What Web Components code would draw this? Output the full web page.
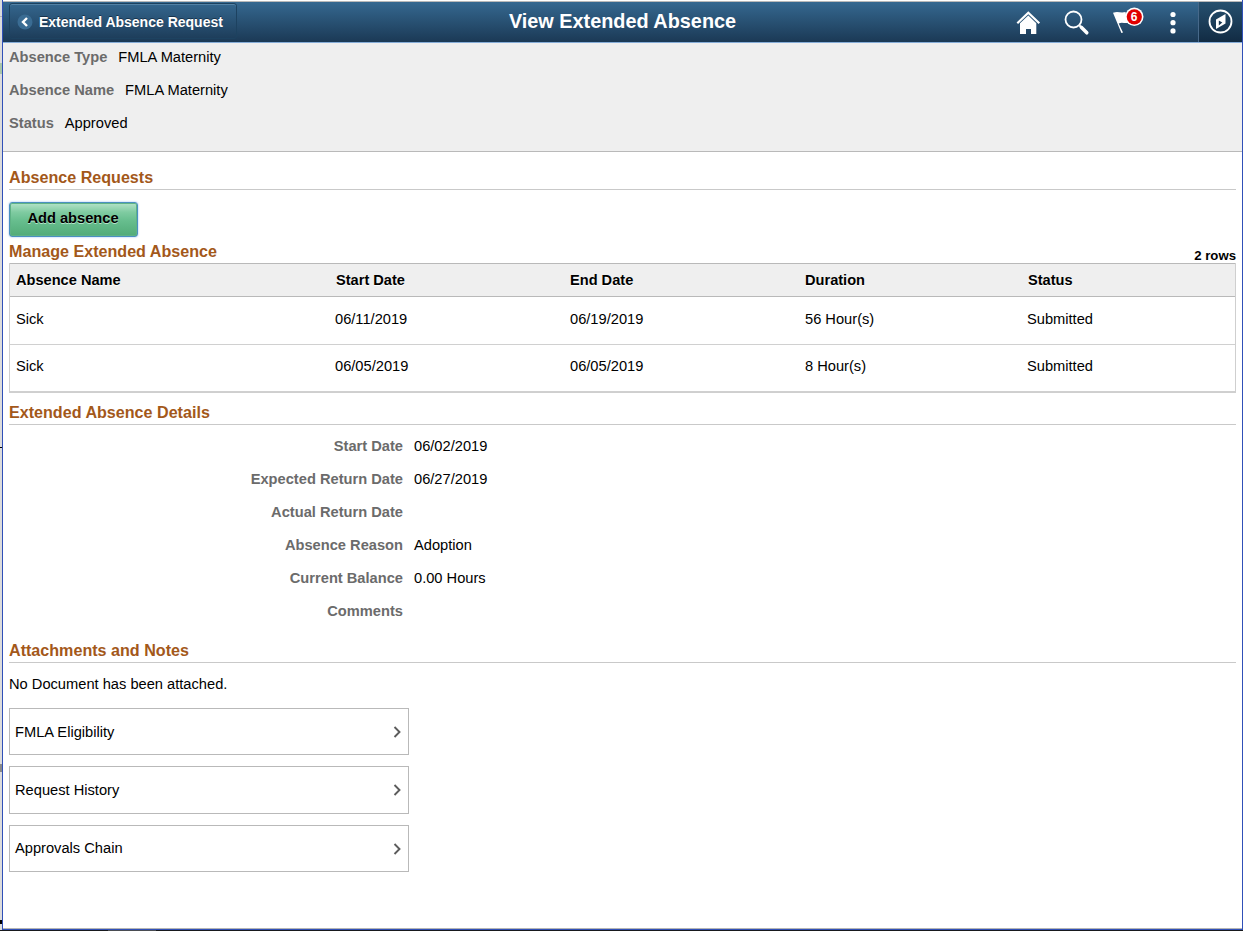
<!DOCTYPE html>
<html lang="en">
<head>
<meta charset="utf-8">
<title>View Extended Absence</title>
<style>
    html, body {
        margin: 0;
        height: 100%;
        overflow: hidden;
        background: #fff;
    }
    body {
        font-family: Arial, "Liberation Sans", sans-serif;
        font-size: 14.67px;
        color: #000;
    }
</style>
</head>
<body>
<app-window>
    <app-banner slot="banner" back="Extended Absence Request" alerts="6">View Extended Absence</app-banner>

    <absence-summary>
        <inline-field label="Absence Type">FMLA Maternity</inline-field>
        <inline-field label="Absence Name">FMLA Maternity</inline-field>
        <inline-field label="Status">Approved</inline-field>
    </absence-summary>

    <page-section heading="Absence Requests" style="--body-height: 53px; --top: 15px">
        <action-button>Add absence</action-button>
    </page-section>

    <absence-grid heading="Manage Extended Absence"></absence-grid>

    <page-section heading="Extended Absence Details" style="--body-height: 215px; --top: 9px">
        <detail-field label="Start Date">06/02/2019</detail-field>
        <detail-field label="Expected Return Date">06/27/2019</detail-field>
        <detail-field label="Actual Return Date"></detail-field>
        <detail-field label="Absence Reason">Adoption</detail-field>
        <detail-field label="Current Balance">0.00 Hours</detail-field>
        <detail-field label="Comments"></detail-field>
    </page-section>

    <page-section heading="Attachments and Notes" style="--body-height: 250px; --top: 0px">
        <attachment-note>No Document has been attached.</attachment-note>
        <link-card>FMLA Eligibility</link-card>
        <link-card style="--card-height: 48px; --nudge: 0px">Request History</link-card>
        <link-card style="--lift: 2px; --nudge: 2px">Approvals Chain</link-card>
    </page-section>
</app-window>

<script>
class BaseElement extends HTMLElement {
    constructor() {
        super()

        this.attachShadow({ mode: 'open' })

        const template = document.createElement('template')
        template.innerHTML = this.render()
        this.shadowRoot.appendChild(template.content.cloneNode(true))
    }

    render() {
        return '<slot></slot>'
    }
}

class AppWindow extends BaseElement {
    render() {
        return `
            <style>
                :host {
                    display: grid;
                    grid-template: 930px 1px / 2px 1fr;
                    width: 1243px;
                }
                .edge {
                    background:
                        linear-gradient(#b5b5b5, #b5b5b5) 0 16px / 2px 1px no-repeat,
                        linear-gradient(#a9c6a9, #a9c6a9) 0 63px / 2px 11px no-repeat,
                        linear-gradient(#000, #000) 0 447px / 2px 1px no-repeat,
                        linear-gradient(#8a8a8a, #8a8a8a) 0 764px / 2px 8px no-repeat,
                        linear-gradient(#000, #000) 0 920px / 2px 4px no-repeat,
                        #dcdcdc;
                }
                .frame {
                    box-sizing: border-box;
                    border: solid #3050b8;
                    border-width: 0 1px 1px;
                    display: flex;
                    flex-direction: column;
                    background: #fff;
                }
                .content {
                    flex: 1;
                    border-bottom: 1px solid #b4b4b4;
                }
                .bottom {
                    grid-column: 1 / 3;
                    background: linear-gradient(#4a4d52, #4a4d52) 108px 0 / 48px 1px no-repeat, #17191d;
                }
            </style>
            <div class="edge"></div>
            <div class="frame">
                <slot name="banner"></slot>
                <div class="content"><slot></slot></div>
            </div>
            <div class="bottom"></div>
        `
    }
}

class AppBanner extends BaseElement {
    render() {
        return `
            <style>
                :host {
                    box-sizing: border-box;
                    display: grid;
                    grid-template-columns: 1fr auto 1fr;
                    height: 42px;
                    margin-top: 1px;
                    border-top: 1px solid #b9b9b9;
                    border-bottom: 1px solid #86add8;
                    background: linear-gradient(#356890, #1b3955);
                    color: #fff;
                    font-weight: bold;
                }
                .back {
                    box-sizing: border-box;
                    justify-self: start;
                    display: flex;
                    align-items: center;
                    gap: 6px;
                    width: 228px;
                    height: 36px;
                    margin: 1px 0 0 6px;
                    padding: 2px 0 0 7px;
                    border: 1px solid #1d4260;
                    border-radius: 3px;
                    box-shadow: inset 0 1px #5482a5;
                    font-size: 14px;
                    text-shadow: 0 -1px #16324b;
                }
                h1 {
                    margin: 0;
                    font-size: 19.85px;
                    line-height: 38px;
                }
                .tools {
                    justify-self: end;
                    display: grid;
                    grid-template-columns: 48px 48px 52px 46px 44px;
                    align-items: center;
                }
                .tools svg {
                    display: block;
                }
                .nav {
                    box-sizing: border-box;
                    height: 100%;
                    border-left: 1px solid #47698a;
                    background: linear-gradient(#26506f, #122b43);
                }
            </style>
            <div class="back">
                <svg width="16" height="16" viewBox="0 0 16 16"><circle cx="8" cy="8" r="7.5" fill="#3a6c93"/><path d="M10 4 6 8l4 4" fill="none" stroke="#fff" stroke-width="2.400"/></svg>
                <span>${this.getAttribute('back')}</span>
            </div>
            <h1><slot></slot></h1>
            <div class="tools">
                <span>
                    <svg width="48" height="40" viewBox="1004 2 48 40"><path d="m1017.300 23.300 11-10.500 11 10.500" fill="none" stroke="#fff" stroke-width="2.200"/><path d="m1028.300 15.500 8 7.700V34h-5.300v-5h-5v5h-6V23.200z" fill="#fff"/></svg>
                </span>
                <span>
                    <svg width="48" height="40" viewBox="1052 2 48 40"><circle cx="1073.500" cy="19.500" r="8" fill="none" stroke="#fff" stroke-width="1.800"/><path d="m1079.500 25.500 2 2" stroke="#fff" stroke-width="2"/><path d="m1081.300 27.300 5.500 5.500" stroke="#fff" stroke-width="3.500" stroke-linecap="round"/></svg>
                </span>
                <span>
                    <svg width="52" height="40" viewBox="1100 2 52 40"><path d="M1113 12.800c5-2 7 .5 12.500-.8l2.500 11c-4 .5-6-1.300-9.300.5l4.300 9-1.600.5z" fill="#fff"/><circle cx="1134.300" cy="16.800" r="9.200" fill="#fff"/><circle cx="1134.300" cy="16.800" r="7.600" fill="#e00000"/><text x="1134" y="21" text-anchor="middle" font-size="12" fill="#fff">${this.getAttribute('alerts')}</text></svg>
                </span>
                <span>
                    <svg width="46" height="40" viewBox="1152 2 46 40" fill="#fff"><circle cx="1173" cy="14.500" r="2.600"/><circle cx="1173" cy="22.700" r="2.600"/><circle cx="1173" cy="30.900" r="2.600"/></svg>
                </span>
                <span class="nav">
                    <svg width="43" height="40" viewBox="1199 2 43 40"><circle cx="1220.500" cy="21.500" r="11" fill="none" stroke="#fff" stroke-width="1.800"/><path d="M1225.500 14v9.500L1216 29v-9.500z" fill="#fff"/><path d="m1218.800 20.500 3.500 2-3.500 3z" fill="#173650"/></svg>
                </span>
            </div>
        `
    }
}

class AbsenceSummary extends BaseElement {
    render() {
        return `
            <style>
                :host {
                    box-sizing: border-box;
                    display: flex;
                    flex-direction: column;
                    gap: 16px;
                    height: 109px;
                    padding: 6px;
                    background: #efefef;
                    border-bottom: 1px solid #b9b9b9;
                }
            </style>
            <slot></slot>
        `
    }
}

class InlineField extends BaseElement {
    render() {
        return `
            <style>
                :host {
                    display: flex;
                    gap: 11px;
                    line-height: 17px;
                }
                b {
                    color: #6b6b6b;
                }
            </style>
            <b>${this.getAttribute('label')}</b><span><slot></slot></span>
        `
    }
}

class PageSection extends BaseElement {
    render() {
        return `
            <style>
                :host {
                    display: block;
                    padding: var(--top) 6px 0;
                }
                h2 {
                    margin: 0;
                    height: 22px;
                    border-bottom: 1px solid #c9c9c9;
                    color: #a3581a;
                    font-size: 16.13px;
                    line-height: 21px;
                }
                .body {
                    height: var(--body-height);
                }
            </style>
            <h2>${this.getAttribute('heading')}</h2>
            <div class="body"><slot></slot></div>
        `
    }
}

class ActionButton extends BaseElement {
    render() {
        return `
            <style>
                :host {
                    display: block;
                    padding-top: 12px;
                }
                button {
                    display: block;
                    width: 129px;
                    height: 35px;
                    padding: 0 1px 3px 0;
                    border: 1px solid #4a90c0;
                    border-radius: 3px;
                    background: linear-gradient(#b4e3c9, #7fcba1 28%, #66bd8d 55%, #52ab78);
                    box-shadow: 0 0 2px #8fb6ee, inset 0 0 0 1px #5fb285;
                    font: bold 14.67px Arial, "Liberation Sans", sans-serif;
                    text-shadow: 0 1px #b5e5cb;
                    color: #000;
                }
            </style>
            <button type="button"><slot></slot></button>
        `
    }
}

class AbsenceGrid extends BaseElement {
    render() {
        const rows = [
            ['Sick', '06/11/2019', '06/19/2019', '56 Hour(s)', 'Submitted'],
            ['Sick', '06/05/2019', '06/05/2019', '8 Hour(s)', 'Submitted'],
        ]

        return `
            <style>
                :host {
                    display: block;
                    padding: 0 6px;
                }
                .caption {
                    display: flex;
                    justify-content: space-between;
                    align-items: end;
                    height: 20px;
                }
                h2 {
                    margin: 0;
                    color: #a3581a;
                    font-size: 16.13px;
                    line-height: 24px;
                }
                .caption span {
                    font-size: 13.2px;
                    font-weight: bold;
                    line-height: 14px;
                }
                table {
                    width: 100%;
                    table-layout: fixed;
                    border-spacing: 0;
                    border: 1px solid #cfcfcf;
                    border-top: 0;
                }
                th, td {
                    box-sizing: border-box;
                    padding: 0 0 0 6px;
                    text-align: left;
                    border-bottom: 1px solid #d0d0d0;
                }
                th {
                    height: 34px;
                    padding-bottom: 1px;
                    background: #efefef;
                    border-top: 1px solid #b9b9b9;
                    border-bottom-color: #b9b9b9;
                    font-size: 14.6px;
                    text-shadow: 0 1px #fff;
                }
                td {
                    height: 48px;
                    padding-bottom: 3px;
                }
                tr:last-child td {
                    height: 47px;
                    padding-bottom: 4px;
                }
                th:nth-child(2), th:nth-child(5) {
                    padding-left: 7px;
                }
            </style>
            <div class="caption"><h2>${this.getAttribute('heading')}</h2><span>${rows.length} rows</span></div>
            <table>
                <colgroup><col width="319"><col width="235"><col width="235"><col width="222"><col></colgroup>
                <thead>
                    <tr><th>Absence Name</th><th>Start Date</th><th>End Date</th><th>Duration</th><th>Status</th></tr>
                </thead>
                <tbody>
                    ${rows.map(row => `<tr>${row.map(cell => `<td>${cell}</td>`).join('')}</tr>`).join('')}
                </tbody>
            </table>
        `
    }
}

class DetailField extends BaseElement {
    render() {
        return `
            <style>
                :host {
                    display: grid;
                    grid-template-columns: 394px 1fr;
                    column-gap: 11px;
                    height: 33px;
                    line-height: 42px;
                }
                b {
                    color: #6b6b6b;
                    text-align: right;
                }
            </style>
            <b>${this.getAttribute('label')}</b><span><slot></slot></span>
        `
    }
}

class AttachmentNote extends BaseElement {
    render() {
        return `
            <style>
                :host {
                    display: block;
                    height: 45px;
                    line-height: 42px;
                }
            </style>
            <slot></slot>
        `
    }
}

class LinkCard extends BaseElement {
    render() {
        return `
            <style>
                :host {
                    box-sizing: border-box;
                    display: flex;
                    justify-content: space-between;
                    align-items: center;
                    width: 400px;
                    height: var(--card-height, 47px);
                    margin-bottom: 11px;
                    padding: 0 6px var(--lift, 0) 5px;
                    border: 1px solid #b9b9b9;
                }
                svg {
                    margin-top: var(--nudge, 1px);
                }
            </style>
            <slot></slot>
            <svg width="9" height="12" viewBox="0 0 9 12"><path d="m1.500 1 5 5-5 5" fill="none" stroke="#5c5c5c" stroke-width="1.900"/></svg>
        `
    }
}

customElements.define('app-window', AppWindow)
customElements.define('app-banner', AppBanner)
customElements.define('absence-summary', AbsenceSummary)
customElements.define('inline-field', InlineField)
customElements.define('page-section', PageSection)
customElements.define('action-button', ActionButton)
customElements.define('absence-grid', AbsenceGrid)
customElements.define('detail-field', DetailField)
customElements.define('attachment-note', AttachmentNote)
customElements.define('link-card', LinkCard)
</script>
</body>
</html>
